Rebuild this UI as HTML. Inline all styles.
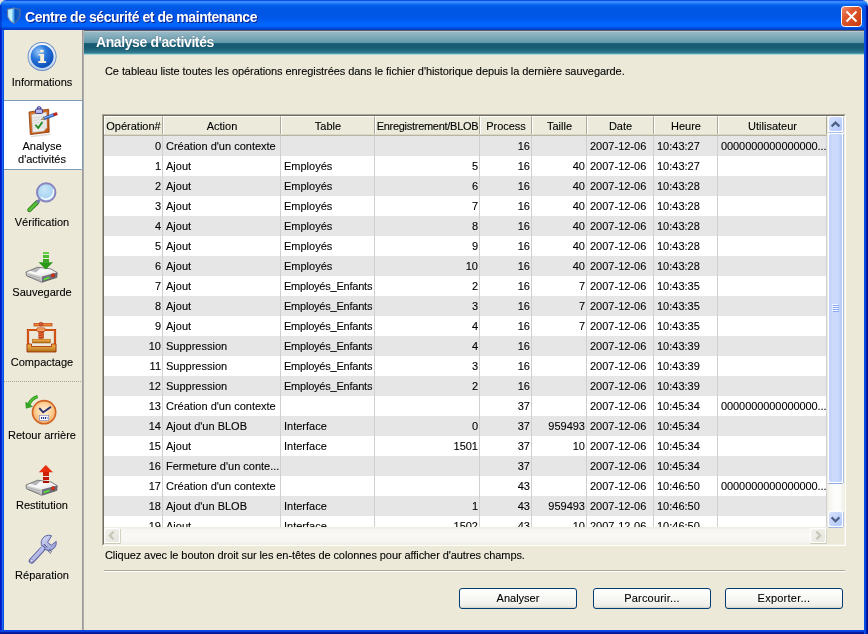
<!DOCTYPE html>
<html><head><meta charset="utf-8">
<style>
*{margin:0;padding:0;box-sizing:border-box}
html,body{width:868px;height:634px;overflow:hidden}
body{position:relative;background:#ece9d8;font-family:"Liberation Sans",sans-serif;font-size:11px;color:#000;line-height:13px;-webkit-text-stroke:0.1px #000}
.a{position:absolute;will-change:transform}
#title{left:0;top:0;width:868px;height:30px;border-radius:6px 6px 0 0;
 background:linear-gradient(to bottom,#0b50e8 0px,#0b50e8 1px,#3d8cff 1px,#3a8cff 2px,#2a82fc 3px,#1272f4 4px,#0562ea 5px,#0058e6 7px,#0055e4 12px,#0058ea 19px,#0062f8 22px,#0066ff 26px,#005cf2 27px,#0048d8 28px,#003cc4 30px)}
#ttext{-webkit-text-stroke:0;left:25px;top:9px;font-size:14px;letter-spacing:-0.45px;font-weight:bold;color:#fff;line-height:16px;text-shadow:1px 1px 0 #0a1e8a;white-space:nowrap}
#fl{left:0;top:30px;width:4px;height:604px;background:linear-gradient(to right,#0018c8 0,#0018c8 1px,#0828d4 1px,#0828d4 2px,#1a6af0 2px,#1a6af0 3px,#0850e0 3px)}
#fr{left:864px;top:5px;width:4px;height:629px;border-top-right-radius:3px;background:linear-gradient(to right,#0850e8 0,#0850e8 1px,#0a48e0 1px,#0a48e0 2px,#001ea8 2px,#001ea8 3px,#001090 3px)}
#fb{left:0;top:630px;width:866px;height:4px;background:linear-gradient(to bottom,#0a46e4 0,#0a46e4 1px,#0840e0 1px,#0840e0 2px,#001ea8 2px,#001ea8 3px,#001490 3px)}
#sep1{left:82px;top:30px;width:1px;height:600px;background:#9a9a9a}
#sep2{left:83px;top:30px;width:1px;height:600px;background:#adadad}
#ph{left:84px;top:30px;width:780px;height:25px;
 background:linear-gradient(to bottom,#5a5e66 0,#5a5e66 1px,#b8c8d0 1px,#b8c8d0 2px,#98bac6 2px,#8eb2c0 4px,#6298ac 13px,#1a6478 13px,#165a72 15px,#185e74 18px,#2e7488 22px,#3a8298 23px,#4c9aac 23px,#4c9aac 24px,#a8d8dc 24px)}
#phtext{-webkit-text-stroke:0;left:96px;top:34px;font-size:14px;letter-spacing:-0.4px;font-weight:bold;color:#fff;line-height:16px;white-space:nowrap;text-shadow:0 0 1px rgba(0,40,60,.6)}
.side{left:3px;width:78px;text-align:center;white-space:nowrap}
#sel{left:4px;top:100px;width:79px;height:70px;background:#fff;border:1px solid #7c9cb4;border-left:none;border-radius:0 2px 2px 0}
#dots{left:4px;top:381px;width:78px;height:1px;background:repeating-linear-gradient(to right,#a8a698 0,#a8a698 1px,transparent 1px,transparent 2px)}
#desc{left:105px;top:65px;white-space:nowrap;letter-spacing:-0.075px}
#frame{left:102px;top:114px;width:744px;height:432px;border-top:1px solid #aca899;border-left:1px solid #aca899;border-right:1px solid #fff;border-bottom:1px solid #fff}
#frame2{left:103px;top:115px;width:742px;height:430px;border-top:1px solid #716f64;border-left:1px solid #716f64;border-right:1px solid #f1efe2;border-bottom:1px solid #f1efe2;background:#fff}
#hint{left:105px;top:549px;white-space:nowrap;letter-spacing:-0.08px}
#hr1{left:104px;top:570px;width:741px;height:1px;background:#aca899}
#hr2{left:104px;top:571px;width:741px;height:1px;background:#fff}
.btn{top:588px;width:118px;height:21px;border:1px solid #003c74;border-radius:3px;background:linear-gradient(to bottom,#fff 0,#fcfcfb 20%,#f4f3ee 70%,#ecebe4 90%,#d6d0c5 100%);text-align:center;line-height:18px}

.hc{position:absolute;top:0;height:19px;padding-top:1px;background:#ebeadb;border-top:1px solid #fff;border-left:1px solid #fff;border-right:1px solid #aca899;text-align:center;line-height:17px;white-space:nowrap;overflow:hidden}
.hb{position:absolute;left:0;top:18px;width:723px;height:2px;background:linear-gradient(to bottom,#dcd8c8 0,#dcd8c8 1px,#b8b4a2 1px)}
.row{position:absolute;left:0;width:723px;height:20px}
.cr,.cl{position:absolute;top:0;height:20px;line-height:21px;white-space:nowrap;overflow:hidden}
.cr{text-align:right;padding-right:1px}
.cl{text-align:left;padding-left:3px}
.gl{position:absolute;top:20px;width:1px;height:391px;background:#d0d0d0}
</style></head><body>
<div class="a" style="left:0;top:0;width:8px;height:8px;background:#e2e0da"></div>
<div class="a" id="title"></div>
<div class="a" style="left:0;top:5px;width:2px;height:25px;background:linear-gradient(to right,rgba(0,20,170,.55),rgba(0,20,170,.25))"></div>
<div class="a" id="ttext">Centre de sécurité et de maintenance</div>
<div class="a" id="fl"></div>
<div class="a" id="fb"></div>
<div class="a" id="fr"></div>
<div class="a" id="sep1"></div>
<div class="a" id="sep2"></div>
<div class="a" id="sel"></div>
<div class="a" id="ph"></div>
<div class="a" id="phtext">Analyse d'activités</div>
<div class="a" id="desc">Ce tableau liste toutes les opérations enregistrées dans le fichier d'historique depuis la dernière sauvegarde.</div>
<div class="a" id="frame"></div>
<div class="a" id="frame2"></div>
<!--TBL-->
<div class="a" id="tbl" style="left:104px;top:116px;width:723px;height:411px;overflow:hidden;background:#fff">
<div class="hc" style="left:0px;width:59px">Opération#</div>
<div class="hc" style="left:59px;width:118px">Action</div>
<div class="hc" style="left:177px;width:94px">Table</div>
<div class="hc" style="left:271px;width:105px;letter-spacing:-0.28px">Enregistrement/BLOB</div>
<div class="hc" style="left:376px;width:52px">Process</div>
<div class="hc" style="left:428px;width:55px">Taille</div>
<div class="hc" style="left:483px;width:67px">Date</div>
<div class="hc" style="left:550px;width:64px">Heure</div>
<div class="hc" style="left:614px;width:109px">Utilisateur</div>
<div class="hb"></div>
<div class="row" style="top:20px;background:#e6e6e6">
<div class="cr" style="left:0px;width:58px">0</div>
<div class="cl" style="left:59px;width:117px">Création d'un contexte</div>
<div class="cr" style="left:376px;width:51px">16</div>
<div class="cl" style="left:483px;width:66px">2007-12-06</div>
<div class="cl" style="left:550px;width:63px">10:43:27</div>
<div class="cl" style="left:614px;width:108px;letter-spacing:-0.08px">0000000000000000...</div>
</div>
<div class="row" style="top:40px;background:#fff">
<div class="cr" style="left:0px;width:58px">1</div>
<div class="cl" style="left:59px;width:117px">Ajout</div>
<div class="cl" style="left:177px;width:93px">Employés</div>
<div class="cr" style="left:271px;width:104px">5</div>
<div class="cr" style="left:376px;width:51px">16</div>
<div class="cr" style="left:428px;width:54px">40</div>
<div class="cl" style="left:483px;width:66px">2007-12-06</div>
<div class="cl" style="left:550px;width:63px">10:43:27</div>
</div>
<div class="row" style="top:60px;background:#e6e6e6">
<div class="cr" style="left:0px;width:58px">2</div>
<div class="cl" style="left:59px;width:117px">Ajout</div>
<div class="cl" style="left:177px;width:93px">Employés</div>
<div class="cr" style="left:271px;width:104px">6</div>
<div class="cr" style="left:376px;width:51px">16</div>
<div class="cr" style="left:428px;width:54px">40</div>
<div class="cl" style="left:483px;width:66px">2007-12-06</div>
<div class="cl" style="left:550px;width:63px">10:43:28</div>
</div>
<div class="row" style="top:80px;background:#fff">
<div class="cr" style="left:0px;width:58px">3</div>
<div class="cl" style="left:59px;width:117px">Ajout</div>
<div class="cl" style="left:177px;width:93px">Employés</div>
<div class="cr" style="left:271px;width:104px">7</div>
<div class="cr" style="left:376px;width:51px">16</div>
<div class="cr" style="left:428px;width:54px">40</div>
<div class="cl" style="left:483px;width:66px">2007-12-06</div>
<div class="cl" style="left:550px;width:63px">10:43:28</div>
</div>
<div class="row" style="top:100px;background:#e6e6e6">
<div class="cr" style="left:0px;width:58px">4</div>
<div class="cl" style="left:59px;width:117px">Ajout</div>
<div class="cl" style="left:177px;width:93px">Employés</div>
<div class="cr" style="left:271px;width:104px">8</div>
<div class="cr" style="left:376px;width:51px">16</div>
<div class="cr" style="left:428px;width:54px">40</div>
<div class="cl" style="left:483px;width:66px">2007-12-06</div>
<div class="cl" style="left:550px;width:63px">10:43:28</div>
</div>
<div class="row" style="top:120px;background:#fff">
<div class="cr" style="left:0px;width:58px">5</div>
<div class="cl" style="left:59px;width:117px">Ajout</div>
<div class="cl" style="left:177px;width:93px">Employés</div>
<div class="cr" style="left:271px;width:104px">9</div>
<div class="cr" style="left:376px;width:51px">16</div>
<div class="cr" style="left:428px;width:54px">40</div>
<div class="cl" style="left:483px;width:66px">2007-12-06</div>
<div class="cl" style="left:550px;width:63px">10:43:28</div>
</div>
<div class="row" style="top:140px;background:#e6e6e6">
<div class="cr" style="left:0px;width:58px">6</div>
<div class="cl" style="left:59px;width:117px">Ajout</div>
<div class="cl" style="left:177px;width:93px">Employés</div>
<div class="cr" style="left:271px;width:104px">10</div>
<div class="cr" style="left:376px;width:51px">16</div>
<div class="cr" style="left:428px;width:54px">40</div>
<div class="cl" style="left:483px;width:66px">2007-12-06</div>
<div class="cl" style="left:550px;width:63px">10:43:28</div>
</div>
<div class="row" style="top:160px;background:#fff">
<div class="cr" style="left:0px;width:58px">7</div>
<div class="cl" style="left:59px;width:117px">Ajout</div>
<div class="cl" style="left:177px;width:93px;letter-spacing:-0.22px">Employés_Enfants</div>
<div class="cr" style="left:271px;width:104px">2</div>
<div class="cr" style="left:376px;width:51px">16</div>
<div class="cr" style="left:428px;width:54px">7</div>
<div class="cl" style="left:483px;width:66px">2007-12-06</div>
<div class="cl" style="left:550px;width:63px">10:43:35</div>
</div>
<div class="row" style="top:180px;background:#e6e6e6">
<div class="cr" style="left:0px;width:58px">8</div>
<div class="cl" style="left:59px;width:117px">Ajout</div>
<div class="cl" style="left:177px;width:93px;letter-spacing:-0.22px">Employés_Enfants</div>
<div class="cr" style="left:271px;width:104px">3</div>
<div class="cr" style="left:376px;width:51px">16</div>
<div class="cr" style="left:428px;width:54px">7</div>
<div class="cl" style="left:483px;width:66px">2007-12-06</div>
<div class="cl" style="left:550px;width:63px">10:43:35</div>
</div>
<div class="row" style="top:200px;background:#fff">
<div class="cr" style="left:0px;width:58px">9</div>
<div class="cl" style="left:59px;width:117px">Ajout</div>
<div class="cl" style="left:177px;width:93px;letter-spacing:-0.22px">Employés_Enfants</div>
<div class="cr" style="left:271px;width:104px">4</div>
<div class="cr" style="left:376px;width:51px">16</div>
<div class="cr" style="left:428px;width:54px">7</div>
<div class="cl" style="left:483px;width:66px">2007-12-06</div>
<div class="cl" style="left:550px;width:63px">10:43:35</div>
</div>
<div class="row" style="top:220px;background:#e6e6e6">
<div class="cr" style="left:0px;width:58px">10</div>
<div class="cl" style="left:59px;width:117px">Suppression</div>
<div class="cl" style="left:177px;width:93px;letter-spacing:-0.22px">Employés_Enfants</div>
<div class="cr" style="left:271px;width:104px">4</div>
<div class="cr" style="left:376px;width:51px">16</div>
<div class="cl" style="left:483px;width:66px">2007-12-06</div>
<div class="cl" style="left:550px;width:63px">10:43:39</div>
</div>
<div class="row" style="top:240px;background:#fff">
<div class="cr" style="left:0px;width:58px">11</div>
<div class="cl" style="left:59px;width:117px">Suppression</div>
<div class="cl" style="left:177px;width:93px;letter-spacing:-0.22px">Employés_Enfants</div>
<div class="cr" style="left:271px;width:104px">3</div>
<div class="cr" style="left:376px;width:51px">16</div>
<div class="cl" style="left:483px;width:66px">2007-12-06</div>
<div class="cl" style="left:550px;width:63px">10:43:39</div>
</div>
<div class="row" style="top:260px;background:#e6e6e6">
<div class="cr" style="left:0px;width:58px">12</div>
<div class="cl" style="left:59px;width:117px">Suppression</div>
<div class="cl" style="left:177px;width:93px;letter-spacing:-0.22px">Employés_Enfants</div>
<div class="cr" style="left:271px;width:104px">2</div>
<div class="cr" style="left:376px;width:51px">16</div>
<div class="cl" style="left:483px;width:66px">2007-12-06</div>
<div class="cl" style="left:550px;width:63px">10:43:39</div>
</div>
<div class="row" style="top:280px;background:#fff">
<div class="cr" style="left:0px;width:58px">13</div>
<div class="cl" style="left:59px;width:117px">Création d'un contexte</div>
<div class="cr" style="left:376px;width:51px">37</div>
<div class="cl" style="left:483px;width:66px">2007-12-06</div>
<div class="cl" style="left:550px;width:63px">10:45:34</div>
<div class="cl" style="left:614px;width:108px;letter-spacing:-0.08px">0000000000000000...</div>
</div>
<div class="row" style="top:300px;background:#e6e6e6">
<div class="cr" style="left:0px;width:58px">14</div>
<div class="cl" style="left:59px;width:117px">Ajout d'un BLOB</div>
<div class="cl" style="left:177px;width:93px">Interface</div>
<div class="cr" style="left:271px;width:104px">0</div>
<div class="cr" style="left:376px;width:51px">37</div>
<div class="cr" style="left:428px;width:54px">959493</div>
<div class="cl" style="left:483px;width:66px">2007-12-06</div>
<div class="cl" style="left:550px;width:63px">10:45:34</div>
</div>
<div class="row" style="top:320px;background:#fff">
<div class="cr" style="left:0px;width:58px">15</div>
<div class="cl" style="left:59px;width:117px">Ajout</div>
<div class="cl" style="left:177px;width:93px">Interface</div>
<div class="cr" style="left:271px;width:104px">1501</div>
<div class="cr" style="left:376px;width:51px">37</div>
<div class="cr" style="left:428px;width:54px">10</div>
<div class="cl" style="left:483px;width:66px">2007-12-06</div>
<div class="cl" style="left:550px;width:63px">10:45:34</div>
</div>
<div class="row" style="top:340px;background:#e6e6e6">
<div class="cr" style="left:0px;width:58px">16</div>
<div class="cl" style="left:59px;width:117px">Fermeture d'un conte...</div>
<div class="cr" style="left:376px;width:51px">37</div>
<div class="cl" style="left:483px;width:66px">2007-12-06</div>
<div class="cl" style="left:550px;width:63px">10:45:34</div>
</div>
<div class="row" style="top:360px;background:#fff">
<div class="cr" style="left:0px;width:58px">17</div>
<div class="cl" style="left:59px;width:117px">Création d'un contexte</div>
<div class="cr" style="left:376px;width:51px">43</div>
<div class="cl" style="left:483px;width:66px">2007-12-06</div>
<div class="cl" style="left:550px;width:63px">10:46:50</div>
<div class="cl" style="left:614px;width:108px;letter-spacing:-0.08px">0000000000000000...</div>
</div>
<div class="row" style="top:380px;background:#e6e6e6">
<div class="cr" style="left:0px;width:58px">18</div>
<div class="cl" style="left:59px;width:117px">Ajout d'un BLOB</div>
<div class="cl" style="left:177px;width:93px">Interface</div>
<div class="cr" style="left:271px;width:104px">1</div>
<div class="cr" style="left:376px;width:51px">43</div>
<div class="cr" style="left:428px;width:54px">959493</div>
<div class="cl" style="left:483px;width:66px">2007-12-06</div>
<div class="cl" style="left:550px;width:63px">10:46:50</div>
</div>
<div class="row" style="top:400px;background:#fff">
<div class="cr" style="left:0px;width:58px">19</div>
<div class="cl" style="left:59px;width:117px">Ajout</div>
<div class="cl" style="left:177px;width:93px">Interface</div>
<div class="cr" style="left:271px;width:104px">1502</div>
<div class="cr" style="left:376px;width:51px">43</div>
<div class="cr" style="left:428px;width:54px">10</div>
<div class="cl" style="left:483px;width:66px">2007-12-06</div>
<div class="cl" style="left:550px;width:63px">10:46:50</div>
</div>
<div class="gl" style="left:58px"></div>
<div class="gl" style="left:176px"></div>
<div class="gl" style="left:270px"></div>
<div class="gl" style="left:375px"></div>
<div class="gl" style="left:427px"></div>
<div class="gl" style="left:482px"></div>
<div class="gl" style="left:549px"></div>
<div class="gl" style="left:613px"></div>
<div class="gl" style="left:722px"></div>
</div>
<!--/TBL-->

<div class="a" style="left:827px;top:116px;width:17px;height:411px;background:linear-gradient(to right,#eceae2 0,#f4f3ee 2px,#fdfdfc 7px,#fcfcfa 13px,#f2f1ea 16px,#eeede6 17px)"></div>
<div class="a" style="left:104px;top:527px;width:723px;height:17px;background:linear-gradient(to bottom,#eeede5 0,#eeede5 1px,#f6f5f1 2px,#faf9f6 8px,#f7f6f2 14px,#f0efe8 17px)"></div>
<div class="a" style="left:827px;top:527px;width:17px;height:17px;background:#ece9d8"></div>
<svg class="a" style="left:0;top:0" width="868" height="634" viewBox="0 0 868 634">
<defs>
 <linearGradient id="sbBtn" x1="0" y1="0" x2="1" y2="1"><stop offset="0" stop-color="#d8e2fd"/><stop offset="0.5" stop-color="#c4d4fc"/><stop offset="1" stop-color="#b0c8f8"/></linearGradient>
 <linearGradient id="sbThumb" x1="0" y1="0" x2="1" y2="0"><stop offset="0" stop-color="#c0d0fb"/><stop offset="0.3" stop-color="#cddafc"/><stop offset="0.7" stop-color="#c8d8fc"/><stop offset="1" stop-color="#b2c8f6"/></linearGradient>
 <linearGradient id="sbDis" x1="0" y1="0" x2="1" y2="1"><stop offset="0" stop-color="#f2f1ec"/><stop offset="1" stop-color="#e6e5dc"/></linearGradient>
</defs>
<!-- up button -->
<rect x="843" y="117" width="1" height="15" fill="#b4c4ec"/>
<rect x="828.5" y="132" width="14" height="1" fill="#a4b8e8"/>
<rect x="828" y="116" width="15" height="16" rx="2" fill="#fff"/>
<rect x="829" y="117" width="13" height="14" rx="2" fill="url(#sbBtn)"/>
<path d="M831.6,126.4 L835.5,122.6 L839.4,126.4" fill="none" stroke="#4d6185" stroke-width="2.2"/>
<!-- thumb -->
<rect x="843" y="134" width="1" height="349" fill="#a8bce8"/>
<rect x="828.5" y="483" width="14" height="1" fill="#8caae0"/>
<rect x="828" y="133" width="15" height="350" rx="2" fill="#fff"/>
<rect x="829" y="134" width="13" height="348" rx="2" fill="url(#sbThumb)"/>
<path d="M832,304.5 H838 M832,306.5 H838 M832,308.5 H838 M832,310.5 H838" stroke="#f0f4ff" stroke-width="1"/>
<path d="M833,305.5 H839 M833,307.5 H839 M833,309.5 H839 M833,311.5 H839" stroke="#8caaf0" stroke-width="1"/>
<!-- down button -->
<rect x="843" y="512" width="1" height="15" fill="#b4c4ec"/>
<rect x="828.5" y="527" width="14" height="1" fill="#a4b8e8"/>
<rect x="828" y="511" width="15" height="16" rx="2" fill="#fff"/>
<rect x="829" y="512" width="13" height="14" rx="2" fill="url(#sbBtn)"/>
<path d="M831.6,517.4 L835.5,521.2 L839.4,517.4" fill="none" stroke="#4d6185" stroke-width="2.2"/>
<!-- left disabled button -->
<rect x="120" y="529" width="1" height="14" fill="#d4d2c0"/>
<rect x="104.5" y="543" width="16" height="1" fill="#ccc9b4"/>
<rect x="104" y="528" width="16" height="15" rx="2" fill="#fff"/>
<rect x="105" y="529" width="14" height="13" rx="2" fill="url(#sbDis)"/>
<path d="M113.6,531.6 L109.8,535.4 L113.6,539.2" fill="none" stroke="#c8c6b8" stroke-width="2.2"/>
<!-- right disabled button -->
<rect x="826" y="529" width="1" height="14" fill="#d4d2c0"/>
<rect x="810.5" y="543" width="16" height="1" fill="#ccc9b4"/>
<rect x="810" y="528" width="16" height="15" rx="2" fill="#fff"/>
<rect x="811" y="529" width="14" height="13" rx="2" fill="url(#sbDis)"/>
<path d="M816.4,531.6 L820.2,535.4 L816.4,539.2" fill="none" stroke="#c8c6b8" stroke-width="2.2"/>
</svg>

<div class="a" id="hint">Cliquez avec le bouton droit sur les en-têtes de colonnes pour afficher d'autres champs.</div>
<div class="a" id="hr1"></div>
<div class="a" id="hr2"></div>
<div class="a btn" style="left:459px">Analyser</div>
<div class="a btn" style="left:593px;letter-spacing:0.2px">Parcourir...</div>
<div class="a btn" style="left:725px;letter-spacing:0.25px">Exporter...</div>


<svg class="a" style="left:0;top:0" width="868" height="634" viewBox="0 0 868 634">
<defs>
 <radialGradient id="infoG" cx="0.35" cy="0.3" r="0.75"><stop offset="0" stop-color="#9ccaf8"/><stop offset="0.45" stop-color="#2a78dc"/><stop offset="1" stop-color="#0a4cb8"/></radialGradient>
 <linearGradient id="ringG" x1="0" y1="0" x2="0" y2="1"><stop offset="0" stop-color="#f4f8fc"/><stop offset="1" stop-color="#b8d0ec"/></linearGradient>
 <radialGradient id="lensG" cx="0.4" cy="0.35" r="0.7"><stop offset="0" stop-color="#c8e6f8"/><stop offset="0.7" stop-color="#a8d4f2"/><stop offset="1" stop-color="#e8f4fc"/></radialGradient>
 <linearGradient id="greenG" x1="0" y1="0" x2="0" y2="1"><stop offset="0" stop-color="#5cd040"/><stop offset="1" stop-color="#1a8a10"/></linearGradient>
 <linearGradient id="redG" x1="0" y1="0" x2="0" y2="1"><stop offset="0" stop-color="#f04010"/><stop offset="1" stop-color="#b80800"/></linearGradient>
 <linearGradient id="driveTop" x1="0" y1="0" x2="1" y2="1"><stop offset="0" stop-color="#e8e8e8"/><stop offset="0.5" stop-color="#fafafa"/><stop offset="1" stop-color="#d8d8e0"/></linearGradient>
 <linearGradient id="baseG" x1="0" y1="0" x2="0" y2="1"><stop offset="0" stop-color="#fcb040"/><stop offset="0.5" stop-color="#d89838"/><stop offset="1" stop-color="#a86810"/></linearGradient>
 <radialGradient id="clockG" cx="0.5" cy="0.45" r="0.55"><stop offset="0" stop-color="#fff0d8"/><stop offset="0.6" stop-color="#fcd098"/><stop offset="1" stop-color="#f4a860"/></radialGradient>
 <linearGradient id="wrG" x1="0" y1="0" x2="1" y2="1"><stop offset="0" stop-color="#d8dcf8"/><stop offset="1" stop-color="#9098d0"/></linearGradient>
 <linearGradient id="shieldG" x1="0" y1="0" x2="1" y2="0"><stop offset="0" stop-color="#a8e4f8"/><stop offset="0.3" stop-color="#c8f4ff"/><stop offset="0.5" stop-color="#40a0e8"/><stop offset="0.6" stop-color="#0a50b8"/><stop offset="1" stop-color="#1a68d0"/></linearGradient>
 <linearGradient id="closeG" x1="0" y1="0" x2="1" y2="1"><stop offset="0" stop-color="#f09070"/><stop offset="0.35" stop-color="#e05a30"/><stop offset="1" stop-color="#c83808"/></linearGradient>
 <linearGradient id="boardG" x1="0" y1="0" x2="1" y2="1"><stop offset="0" stop-color="#dc7a30"/><stop offset="1" stop-color="#c05010"/></linearGradient>
</defs>
<!-- title shield -->
<path d="M7.5,9.2 Q11,9 13.8,7.8 Q16.6,9 20.2,9.2 L20,16.5 Q18.5,21 13.8,23.6 Q9,21 7.6,16.5 Z" fill="url(#shieldG)" stroke="#6a7090" stroke-width="0.9"/>
<!-- close button -->
<rect x="841.5" y="6.5" width="20" height="20" rx="3" fill="url(#closeG)" stroke="#fff" stroke-width="1"/>
<path d="M846.5,11.5 L856.5,21.5 M856.5,11.5 L846.5,21.5" stroke="#fff" stroke-width="2"/>

<!-- info icon -->
<circle cx="42.1" cy="56.5" r="14.5" fill="#6a8cc0"/>
<circle cx="42.1" cy="56.5" r="13.6" fill="url(#ringG)"/>
<circle cx="42.1" cy="56.5" r="11.4" fill="url(#infoG)"/>
<ellipse cx="41.9" cy="51" rx="2" ry="1.6" fill="#f6eed8"/>
<path d="M38.4,54 H44.1 V61.1 H46.1 V63 H38.3 V61.1 H40.2 V55.6 H38.4 Z" fill="#f6eed8"/>

<!-- clipboard -->
<path d="M30.5,136 L50,133.5 L50.5,135 L31,137.2 Z" fill="#c8c4b8" opacity="0.6"/>
<path d="M29,112 L48.6,109.2 L49.2,132.2 L30.3,134.6 Z" fill="url(#boardG)" stroke="#8a3808" stroke-width="0.8"/>
<path d="M31.6,114.4 L46.6,112.3 L47,127.5 L43.6,131.2 L32.6,132.4 Z" fill="#ececea" stroke="#b8b8b0" stroke-width="0.5"/>
<path d="M43.6,131.2 L44.2,127.8 L47,127.5 Z" fill="#d8d8d0"/>
<path d="M33,118 L45,116.5 M33.2,120.5 L45.2,119 M33.4,123 L45.2,121.5 M33.6,125.5 L45.4,124 M33.8,128 L45.5,126.5" stroke="#c8c8c8" stroke-width="0.6"/>
<rect x="37.3" y="106.7" width="3.6" height="2.9" rx="1.2" fill="#a8a8e0" stroke="#2a2a80" stroke-width="0.9"/>
<rect x="35.5" y="109.1" width="7.1" height="4.3" rx="1" fill="#bcbcec" stroke="#2a2a80" stroke-width="0.9"/>
<path d="M35.4,124.8 L38.2,128 L42.4,122" fill="none" stroke="#1a8a1a" stroke-width="1.7"/>
<path d="M43.55,117.23 L53.4,113.56 L54.3,116 L44.46,119.67 Z" fill="#3a78d8" stroke="#1a3a90" stroke-width="0.55"/>
<path d="M44,118 L53.8,114.4" stroke="#b0d4ff" stroke-width="0.6"/>
<path d="M41.2,119.5 L43.55,117.23 L44.46,119.67 Z" fill="#e0b060" stroke="#404040" stroke-width="0.4"/>
<path d="M53.4,113.56 L56.55,112.38 L57.45,114.82 L54.3,116 Z" fill="#d82010" stroke="#801008" stroke-width="0.5"/>

<!-- magnifier -->
<path d="M29.4,210 L37.2,202.4" stroke="#2a7a18" stroke-width="4.4" stroke-linecap="round"/>
<path d="M29.4,210 L37.2,202.4" stroke="#58c038" stroke-width="2.6" stroke-linecap="round"/>
<path d="M37,202.6 L39.6,200" stroke="#7a78b0" stroke-width="3"/>
<circle cx="46.2" cy="192.4" r="9.2" fill="url(#lensG)" stroke="#8884c0" stroke-width="2"/>
<path d="M40.8,197.2 Q46,201.4 51.6,196.6 Q54.2,193 53.6,189" fill="none" stroke="#ffffff" stroke-width="1.4" opacity="0.9"/>

<!-- drive + green arrow -->
<g id="drive">
<path d="M26,272 L37.7,267.2 L51,269 L57.2,272.6 L41.8,276.4 Z" fill="url(#driveTop)"/>
<path d="M30,270.4 L37.7,267.2 L41,267.6 L36,272.6 Z" fill="#b8b8bc"/>
<path d="M26,272 L41.8,276.4 L41.8,282.3 L26.5,275.8 Z" fill="#d4d4d4"/>
<path d="M41.8,276.4 L57.2,272.6 L56.8,277.4 L41.8,282.3 Z" fill="#70707e"/>
<path d="M27.6,274.4 L40.6,278.2 M27.8,276.2 L40.6,280.2" stroke="#8a8a8a" stroke-width="0.6"/>
<path d="M26,272 L37.7,267.2 L51,269 L57.2,272.6 L56.8,277.4 L41.8,282.3 L26.5,275.8 Z" fill="none" stroke="#505050" stroke-width="0.7" stroke-linejoin="round"/>
<path d="M43.8,279.5 L49.4,277.5" stroke="#50e830" stroke-width="1.8"/>
<circle cx="53" cy="275.3" r="1.7" fill="#e03812" stroke="#901000" stroke-width="0.5"/>
</g>
<rect x="43" y="252" width="6" height="2" fill="#60d040"/>
<rect x="43" y="255" width="6" height="3" fill="#4cbc30"/>
<rect x="43" y="259" width="6" height="3.4" fill="#38a820"/>
<path d="M38.6,262.2 L53,262.2 L45.8,269.6 Z" fill="#2a9818"/>

<!-- press -->
<rect x="34" y="323.6" width="18" height="2.4" fill="#f08830" stroke="#b82800" stroke-width="0.6"/>
<circle cx="41" cy="324.2" r="2" fill="#d05838" stroke="#a02810" stroke-width="0.5"/>
<path d="M28,351 V330 H55 V351" fill="none" stroke="#b82800" stroke-width="2.2"/>
<path d="M28,351 V330 H55 V351" fill="none" stroke="#f89030" stroke-width="0.8"/>
<rect x="36.8" y="327.8" width="8.2" height="3.8" rx="1" fill="#f0a060" stroke="#c04010" stroke-width="0.6"/>
<rect x="38.8" y="331.6" width="4.8" height="7" fill="#e87838" stroke="#a83010" stroke-width="0.5"/>
<path d="M39,333.5 L43.4,332.2 M39,335.8 L43.4,334.5 M39,338 L43.4,336.8" stroke="#b02808" stroke-width="0.9"/>
<rect x="32.4" y="339.2" width="18" height="3.8" fill="url(#baseG)" stroke="#a05010" stroke-width="0.5"/>
<path d="M27,344 H31.5 V346.5 H51.5 V344 H56 V352 H27 Z" fill="url(#baseG)" stroke="#a02800" stroke-width="0.8"/>

<!-- clock + green arrow -->
<circle cx="44.1" cy="412.2" r="11.6" fill="url(#clockG)" stroke="#d06424" stroke-width="1.6"/>
<path d="M39.8,408.6 L43.2,412.3 L50.4,407.3" fill="none" stroke="#283070" stroke-width="1.9" stroke-linecap="round"/>
<rect x="39.5" y="415.3" width="9.2" height="5.2" fill="#ffffff" stroke="#7080d0" stroke-width="0.6"/>
<path d="M41,418 H47.4" stroke="#303888" stroke-width="1.8" stroke-dasharray="1.2,0.8"/>
<path d="M37.6,396.4 Q31,398.5 28.8,404.6" fill="none" stroke="#1a8a10" stroke-width="3.2"/>
<path d="M37.6,396.4 Q31,398.5 28.8,404.6" fill="none" stroke="#58c838" stroke-width="1.6"/>
<path d="M25.8,402.2 L26.2,408.2 L32.4,406.4 Z" fill="#3aa820" stroke="#1a8a10" stroke-width="0.6"/>

<!-- drive + red arrow -->
<use href="#drive" x="0" y="213"/>
<path d="M45.8,465 L53,472.2 L38.8,472.2 Z" fill="#e83010"/>
<rect x="43" y="471.8" width="6" height="4.2" fill="#d02008"/>
<rect x="43" y="477" width="6" height="3" fill="#c01808"/>
<rect x="43" y="481" width="6" height="2" fill="#b01008"/>

<!-- wrench -->
<path d="M31.6,560.8 L42,549.6" stroke="#50589a" stroke-width="5.6" stroke-linecap="round"/>
<path d="M31.6,560.8 L42,549.6" stroke="url(#wrG)" stroke-width="3.8" stroke-linecap="round"/>
<path d="M51.6,535.8 A7.6,7.6 0 1 0 56.2,541.4 L51.4,545.2 L47.6,542.4 Z" fill="url(#wrG)" stroke="#50589a" stroke-width="0.9" stroke-linejoin="round"/>
<path d="M40.2,550.6 L43.6,547" stroke="#b8c0f0" stroke-width="2.6"/>
<circle cx="31.8" cy="560.6" r="1.2" fill="#f4f2ea" stroke="#6068a8" stroke-width="0.5"/>
<path d="M42.4,545.2 L45.8,548.6 M43.8,544 L47.2,547.4" stroke="#383c80" stroke-width="1"/>
<path d="M47.6,550.4 L51,553.6 M49.4,549.6 L52,552.2" stroke="#404478" stroke-width="0.9"/>
</svg>

<div class="a side" style="top:76px">Informations</div>
<div class="a side" style="top:140px">Analyse<br>d'activités</div>
<div class="a side" style="top:216px">Vérification</div>
<div class="a side" style="top:286px">Sauvegarde</div>
<div class="a side" style="top:356px">Compactage</div>
<div class="a" id="dots"></div>
<div class="a side" style="top:429px">Retour arrière</div>
<div class="a side" style="top:499px">Restitution</div>
<div class="a side" style="top:569px">Réparation</div>
</body></html>
